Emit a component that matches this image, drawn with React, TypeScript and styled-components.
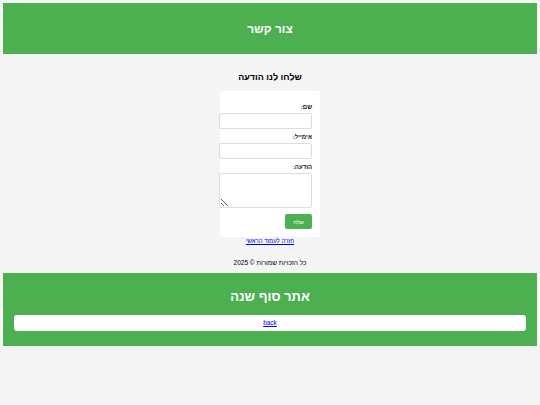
import styled, { createGlobalStyle } from 'styled-components';

const GlobalStyle = createGlobalStyle`
  html, body { background: #f4f4f4; }
  body {
    margin: 3px;
    direction: rtl;
    font-family: "Liberation Sans", Arial, sans-serif;
    color: #000;
  }
`;

const Header = styled.header`
  background: #4caf50;
  height: 51px;
  display: flex;
  align-items: center;
  justify-content: center;
`;

const HeaderTitle = styled.h1`
  margin: 0;
  color: #fff;
  font-size: 12px;
  font-weight: bold;
`;

const Main = styled.main`
  display: flex;
  flex-direction: column;
  align-items: center;
  padding-top: 18px;
`;

const PageTitle = styled.h2`
  margin: 0 0 9px;
  font-size: 9px;
  line-height: 10px;
  font-weight: bold;
`;

const Card = styled.form`
  width: 84px;
  padding: 8px;
  background: #fff;
  border-radius: 3px;
  display: flex;
  flex-direction: column;
  align-items: flex-start;
`;

const Label = styled.label`
  display: block;
  margin-top: 5px;
  font-size: 6px;
  line-height: 7px;
  font-weight: bold;
  color: #111;
`;

const Input = styled.input`
  box-sizing: content-box;
  width: 100%;
  height: 14px;
  margin: 2px 0 0;
  padding: 0 3.5px;
  border: 1px solid #dddddd;
  border-radius: 2px;
  background: #fff;
  font: inherit;
  font-size: 6px;
`;

const TextArea = styled.textarea`
  box-sizing: content-box;
  width: 100%;
  height: 33px;
  margin: 2px 0 0;
  padding: 0 3.5px;
  border: 1px solid #dddddd;
  border-radius: 2px;
  resize: vertical;
  font: inherit;
  font-size: 6px;
`;

const SubmitButton = styled.button`
  margin-top: 6px;
  width: 27px;
  height: 15px;
  padding: 0;
  border: none;
  border-radius: 2px;
  background: #4caf50;
  color: #fff;
  font-family: inherit;
  font-size: 5.5px;
`;

const BackLink = styled.a`
  margin-top: 1px;
  font-size: 6px;
  line-height: 7px;
  color: #0000ee;
`;

const Copyright = styled.p`
  margin: 14px 0 6px;
  font-size: 6.5px;
  line-height: 8px;
`;

const Footer = styled.footer`
  background: #4caf50;
  padding: 15px 11px;
  display: flex;
  flex-direction: column;
  align-items: stretch;
  gap: 9px;
`;

const FooterTitle = styled.h1`
  margin: 0;
  color: #fff;
  font-size: 13px;
  line-height: 18px;
  font-weight: bold;
  text-align: center;
`;

const FooterBar = styled.div`
  background: #fff;
  border-radius: 3px;
  height: 15.5px;
  display: flex;
  align-items: center;
  justify-content: center;
`;

const FooterLink = styled.a`
  font-size: 6.5px;
  color: #0000ee;
`;

export default function App() {
  return (
    <>
      <GlobalStyle />
      <Header>
        <HeaderTitle>צור קשר</HeaderTitle>
      </Header>
      <Main>
        <PageTitle>שלחו לנו הודעה</PageTitle>
        <Card onSubmit={(e) => e.preventDefault()}>
          <Label htmlFor="name">שם:</Label>
          <Input id="name" type="text" />
          <Label htmlFor="email">אימייל:</Label>
          <Input id="email" type="email" />
          <Label htmlFor="message">הודעה:</Label>
          <TextArea id="message" />
          <SubmitButton type="submit">שלח</SubmitButton>
        </Card>
        <BackLink href="#">חזרה לעמוד הראשי</BackLink>
        <Copyright>כל הזכויות שמורות © 2025</Copyright>
      </Main>
      <Footer>
        <FooterTitle>אתר סוף שנה</FooterTitle>
        <FooterBar>
          <FooterLink href="#">back</FooterLink>
        </FooterBar>
      </Footer>
    </>
  );
}
